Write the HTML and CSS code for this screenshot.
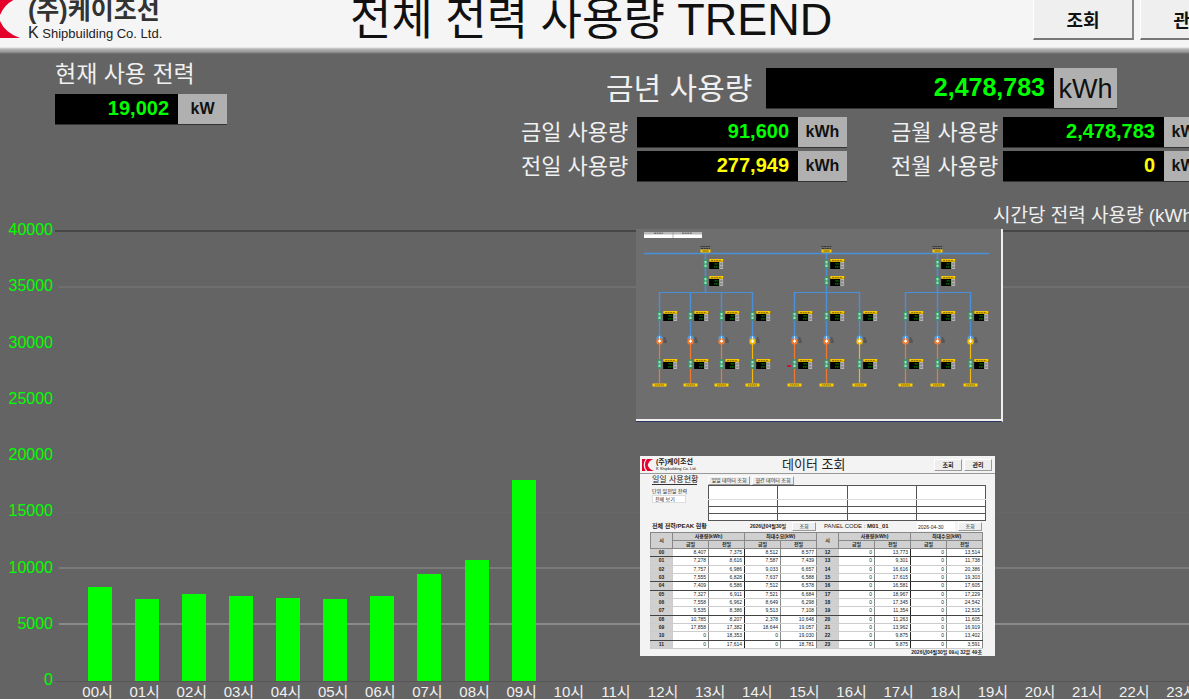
FILE: index.html
```html
<!DOCTYPE html>
<html lang="ko">
<head>
<title>전체 전력 사용량 TREND</title>
<meta charset="utf-8">
<link rel="stylesheet" href="styles.css">
</head>

<body>

<svg class="defs" width="0" height="0" aria-hidden="true">
	<symbol id="mark" viewBox="0 0 36 36">
		<path d="M0 0h11Q5 9 5 18t6 18H0z"/>
		<path d="M15 0h19Q21 5 17 18q4 13 19 18H16Q9 29 9 18T15 0z"/>
	</symbol>
	<!-- breaker + meter, origin is on the feeder line -->
	<symbol id="meter" overflow="visible">
		<rect x="-2" y="-5" width="4" height="10" rx="2" fill="#359a6c"/>
		<rect x="-1" y="-3" width="2" height="2.4" fill="#a5dfc0"/>
		<rect x="-1" y=".6" width="2" height="2.4" fill="#a5dfc0"/>
		<rect x="3.7" y="-5" width="14.3" height="10" fill="#000"/>
		<rect x="13.7" y="-2" width="4.3" height="7" fill="#b5b5b5"/>
		<path d="M14.6 0h2.4M14.6 3h2.4" stroke="#555" stroke-width=".8"/>
		<rect x="3.7" y="-5" width="14.3" height="2.8" fill="#ffcc00"/>
		<path d="M5.5 -3.6h10.5" stroke="#8a6d00" stroke-width="1" stroke-dasharray="2 .6"/>
		<path d="M9 -.2h4M8.5 2.8h4.5" stroke="#0a7d0a" stroke-width="1.2" stroke-dasharray="1.4 .4"/>
	</symbol>
	<symbol id="trans" overflow="visible">
		<circle cy="-1.5" r="3" fill="#4c9be6"/>
		<circle cy="1.4" r="3.2" fill="currentColor"/>
		<path d="M0 -3.5v2M0 -.5L-1.2 1.5h2.4zM0 1v2" stroke="#fff" stroke-width=".9" fill="#fff"/>
		<path d="M4 -2h2M4 0h3M4 2h3.4" stroke="#333" stroke-width=".8"/>
	</symbol>
	<symbol id="load" overflow="visible">
		<rect x="-7" y="-1.5" width="14" height="3" fill="#ffcc00"/>
		<path d="M-4.5 0h9" stroke="#6b5600" stroke-width="1" stroke-dasharray="1.6 .4"/>
	</symbol>
	<symbol id="incomer" overflow="visible">
		<path d="M-5 -6.5h10M-4.5 -4.5h9" stroke="#333" stroke-width="1" stroke-dasharray="2 .6"/>
		<rect x="-5" y="-3.5" width="10" height="3" fill="#ffcc00"/>
		<path d="M-3 -2h6" stroke="#6b5600" stroke-width="1"/>
	</symbol>
	<!-- one branch: two meters, transformer, load -->
	<symbol id="branch" overflow="visible">
		<path d="M0 63V108" stroke="#4a90d9" stroke-width="1.4"/>
		<path d="M0 114V154" stroke="currentColor" stroke-width="1.2"/>
		<use href="#meter" y="87"/>
		<use href="#trans" y="111"/>
		<use href="#meter" y="135"/>
		<use href="#load" y="156"/>
	</symbol>
	<symbol id="feeder" overflow="visible">
		<path d="M0 24V63" stroke="#4a90d9" stroke-width="1.6"/>
		<use href="#incomer" y="24"/>
		<use href="#meter" y="35"/>
		<use href="#meter" y="52"/>
	</symbol>
</svg>

<header class="topbar">
	<div class="brand">
		<svg class="brand-mark"><use href="#mark"/></svg>
		<div>
			<div class="brand-ko">(주)케이조선</div>
			<div class="brand-en"><span>K</span> Shipbuilding Co. Ltd.</div>
		</div>
	</div>
	<h1>전체 전력 사용량 TREND</h1>
	<nav class="menu">
		<button type="button">조회</button>
		<button type="button">관리</button>
	</nav>
</header>

<main>
	<section class="summary">
		<div class="now">
			<h2>현재 사용 전력</h2>
			<div class="readout"><output>19,002</output><span class="unit">kW</span></div>
		</div>
		<div class="totals">
			<div class="year">
				<span class="name">금년 사용량</span>
				<div class="readout big"><output>2,478,783</output><span class="unit">kWh</span></div>
			</div>
			<div class="periods">
				<span class="name">금일 사용량</span>
				<div class="readout"><output>91,600</output><span class="unit">kWh</span></div>
				<span class="name month">금월 사용량</span>
				<div class="readout"><output>2,478,783</output><span class="unit">kWh</span></div>
				<span class="name">전일 사용량</span>
				<div class="readout prev"><output>277,949</output><span class="unit">kWh</span></div>
				<span class="name month">전월 사용량</span>
				<div class="readout prev"><output>0</output><span class="unit">kWh</span></div>
			</div>
		</div>
	</section>

	<section class="trend">
		<h2>시간당 전력 사용량 (kWh)</h2>
		<div class="chart">
			<div class="y-axis">
				<span>40000</span><span>35000</span><span>30000</span><span>25000</span><span>20000</span><span>15000</span><span>10000</span><span>5000</span><span>0</span>
			</div>
			<div class="plot">
				<div class="grid"><i></i><i></i><i></i><i></i><i></i><i></i><i></i><i></i></div>
				<div class="bars">
					<b style="height:21.0%"></b><b style="height:18.2%"></b><b style="height:19.4%"></b><b style="height:18.9%"></b><b style="height:18.4%"></b><b style="height:18.3%"></b><b style="height:18.9%"></b><b style="height:23.8%"></b><b style="height:27.0%"></b><b style="height:44.7%"></b><b></b><b></b><b></b><b></b><b></b><b></b><b></b><b></b><b></b><b></b><b></b><b></b><b></b><b></b>
				</div>
			</div>
		</div>
		<div class="x-axis">
			<span>00시</span><span>01시</span><span>02시</span><span>03시</span><span>04시</span><span>05시</span><span>06시</span><span>07시</span><span>08시</span><span>09시</span><span>10시</span><span>11시</span><span>12시</span><span>13시</span><span>14시</span><span>15시</span><span>16시</span><span>17시</span><span>18시</span><span>19시</span><span>20시</span><span>21시</span><span>22시</span><span>23시</span>
		</div>
	</section>
</main>

<!-- single line diagram window -->
<aside class="window diagram">
	<svg viewBox="0 0 364 189" width="364" height="189" fill="none" stroke-width="1">
		<rect x="8" y="3" width="58" height="6" fill="#fff"/>
		<rect x="8" y="3" width="58" height="2.5" fill="#b8b8b8"/>
		<path d="M18 4.2h9M46 4.2h10" stroke="#555" stroke-dasharray="2 .6"/>
		<path d="M37 3v6" stroke="#888" stroke-width=".6"/>
		<path d="M8 24.5H353" stroke="#4a90d9" stroke-width="1.4"/>
		<path d="M23 63.5H117M158 63.5H224M269 63.5H335" stroke="#4a90d9"/>
		<use href="#branch" x="23.5" color="#ee7a30"/>
		<use href="#branch" x="54.5" color="#ee7a30"/>
		<use href="#branch" x="85.5" color="#ee7a30"/>
		<use href="#branch" x="116.5" color="#f0b90c"/>
		<use href="#branch" x="158.5" color="#ee7a30"/>
		<use href="#branch" x="190.5" color="#ee7a30"/>
		<use href="#branch" x="223.5" color="#f0b90c"/>
		<use href="#branch" x="269.5" color="#ee7a30"/>
		<use href="#branch" x="301.5" color="#ee7a30"/>
		<use href="#branch" x="334.5" color="#f0b90c"/>
		<use href="#feeder" x="69.5"/>
		<use href="#feeder" x="190.5"/>
		<use href="#feeder" x="301.5"/>
		<rect x="151" y="136" width="4" height="2" fill="#d0103a"/>
	</svg>
</aside>

<!-- data query window -->
<aside class="window report">
	<div class="r-top">
		<svg class="r-mark"><use href="#mark"/></svg>
		<div class="r-brand">(주)케이조선<small>K Shipbuilding Co. Ltd.</small></div>
		<h2>데이터 조회</h2>
		<button type="button">조회</button>
		<button type="button">관리</button>
	</div>
	<div class="r-query">
		<div class="r-side">
			<h3>일일 사용현황</h3>
			<label for="unit">단위 일전일 전력</label>
			<select id="unit"><option>전체 보기</option></select>
		</div>
		<div class="r-main">
			<button type="button">일일 데이터 조회</button>
			<button type="button">월간 데이터 조회</button>
			<table class="blank">
				<tr><td></td><td></td><td></td><td></td></tr>
				<tr><td></td><td></td><td></td><td></td></tr>
				<tr><td></td><td></td><td></td><td></td></tr>
				<tr><td></td><td></td><td></td><td></td></tr>
			</table>
		</div>
	</div>
	<div class="r-bar">
		<strong>전체 전력/PEAK 현황</strong>
		<strong class="r-date">2026년04월30일</strong>
		<button type="button">조회</button>
		<span class="r-code">PANEL CODE : <b>M01_01</b></span>
		<input type="text" value="2026-04-30" aria-label="날짜">
		<button type="button">조회</button>
	</div>
	<table class="data">
		<colgroup><col class="h"><col><col><col><col><col class="h"><col><col><col><col></colgroup>
		<thead>
			<tr><th rowspan="2">시</th><th colspan="2">사용량(kWh)</th><th colspan="2">최대수요(kW)</th><th rowspan="2">시</th><th colspan="2">사용량(kWh)</th><th colspan="2">최대수요(kW)</th></tr>
			<tr><th>금일</th><th>전일</th><th>금일</th><th>전일</th><th>금일</th><th>전일</th><th>금일</th><th>전일</th></tr>
		</thead>
		<tbody>
			<tr><th>00</th><td>8,407</td><td>7,375</td><td>8,512</td><td>8,577</td><th>12</th><td>0</td><td>13,773</td><td>0</td><td>13,514</td></tr>
			<tr><th>01</th><td>7,278</td><td>8,616</td><td>7,587</td><td>7,439</td><th>13</th><td>0</td><td>9,301</td><td>0</td><td>11,738</td></tr>
			<tr><th>02</th><td>7,757</td><td>6,986</td><td>9,033</td><td>6,657</td><th>14</th><td>0</td><td>16,616</td><td>0</td><td>20,386</td></tr>
			<tr><th>03</th><td>7,555</td><td>6,828</td><td>7,637</td><td>6,588</td><th>15</th><td>0</td><td>17,615</td><td>0</td><td>19,303</td></tr>
			<tr><th>04</th><td>7,409</td><td>6,586</td><td>7,512</td><td>6,578</td><th>16</th><td>0</td><td>16,581</td><td>0</td><td>17,605</td></tr>
			<tr><th>05</th><td>7,327</td><td>6,911</td><td>7,521</td><td>6,684</td><th>17</th><td>0</td><td>18,967</td><td>0</td><td>17,229</td></tr>
			<tr><th>06</th><td>7,558</td><td>6,962</td><td>8,649</td><td>6,298</td><th>18</th><td>0</td><td>17,345</td><td>0</td><td>24,542</td></tr>
			<tr><th>07</th><td>9,535</td><td>8,386</td><td>9,513</td><td>7,108</td><th>19</th><td>0</td><td>11,354</td><td>0</td><td>12,515</td></tr>
			<tr><th>08</th><td>10,785</td><td>8,207</td><td>2,378</td><td>10,648</td><th>20</th><td>0</td><td>11,263</td><td>0</td><td>11,605</td></tr>
			<tr><th>09</th><td>17,858</td><td>17,382</td><td>18,644</td><td>19,057</td><th>21</th><td>0</td><td>13,962</td><td>0</td><td>16,919</td></tr>
			<tr><th>10</th><td>0</td><td>18,353</td><td>0</td><td>19,030</td><th>22</th><td>0</td><td>9,875</td><td>0</td><td>13,402</td></tr>
			<tr><th>11</th><td>0</td><td>17,614</td><td>0</td><td>18,781</td><th>23</th><td>0</td><td>9,875</td><td>0</td><td>3,591</td></tr>
		</tbody>
	</table>
	<p class="r-clock">2026년04월30일 09시 32분 49초</p>
</aside>

</body>
</html>
```
FILE: styles.css
```css
* { box-sizing: border-box; }

body {
	position: relative;
	margin: 0;
	height: 100vh;
	overflow: hidden;
	background: #646464;
	color: #f0f0f0;
	font-family: "Liberation Sans", "Noto Sans CJK KR", sans-serif;
}

h1, h2, h3, p { margin: 0; font-weight: normal; }

button, input, select { font-family: inherit; border-radius: 0; }

.defs { position: absolute; }

/* top bar */
.topbar {
	display: flex;
	align-items: flex-start;
	height: 54px;
	overflow: hidden;
	background: linear-gradient(#f5f5f5 47px, #b4b4b4 49px, #969696 52px, #646464 54px);
	color: #111;
}

.brand {
	display: flex;
	flex: none;
	gap: 8px;
	width: 350px;
	margin: -4px 0 0 -20px;
}

.brand-mark {
	width: 40px;
	height: 44px;
	fill: #e4002b;
}

.brand-ko {
	font-size: 25px;
	font-weight: bold;
	line-height: 28px;
	color: #333;
}

.brand-en {
	font-size: 13px;
	line-height: 18px;
	color: #222;
}

.brand-en span { font-size: 16px; }

.topbar h1 {
	flex: none;
	margin-left: 20px;
	font-size: 45px;
	line-height: 40px;
	white-space: nowrap;
}

.menu {
	display: flex;
	flex: none;
	gap: 6px;
	margin: -4px -52px 0 auto;
}

.menu button {
	width: 101px;
	height: 44px;
	padding: 2px 0 0;
	border: 1px solid #fff;
	border-right: 2px solid #888;
	border-bottom: 2px solid #777;
	background: #efefef;
	color: #111;
	font-size: 18px;
	font-weight: bold;
}

/* readouts */
.summary {
	display: flex;
	padding-left: 55px;
}

.now {
	flex: none;
	width: 172px;
	padding-top: 8px;
}

.now h2 {
	margin-bottom: 8px;
	font-size: 23px;
	line-height: 24px;
	white-space: nowrap;
}

.readout {
	display: flex;
	height: 31px;
	background: #000;
	border-bottom: 1px solid #333;
	font-size: 20px;
	font-weight: bold;
}

.readout output {
	flex: 1;
	padding-right: 9px;
	line-height: 28px;
	text-align: right;
	color: #00ff00;
}

.readout.prev output { color: #ffff00; }

.readout .unit {
	width: 49px;
	background: #b0b0b0;
	color: #111;
	font-size: 16px;
	line-height: 30px;
	text-align: center;
}

.totals {
	flex: none;
	margin-left: 294px;
	padding-top: 14px;
}

.name { white-space: nowrap; }

.year {
	display: flex;
	align-items: center;
	gap: 14px;
	margin-left: 85px;
}

.year .name {
	width: 146px;
	font-size: 30px;
	line-height: 36px;
}

.readout.big {
	width: 351px;
	height: 41px;
	font-size: 25px;
}

.readout.big output { line-height: 38px; }

.readout.big .unit {
	width: 63px;
	font-size: 27px;
	font-weight: normal;
	line-height: 42px;
}

.periods {
	display: grid;
	grid-template-columns: 110px 210px 144px 210px;
	gap: 3px 6px;
	align-items: center;
	margin-top: 8px;
}

.periods .name { font-size: 22px; line-height: 28px; }
.periods .month { margin-left: 38px; }

/* chart */
.trend h2 {
	margin-top: 24px;
	padding-left: 993px;
	font-size: 19px;
	line-height: 20px;
	white-space: nowrap;
}

.chart {
	display: flex;
	height: 452px;
	margin-top: 4px;
}

.y-axis {
	display: flex;
	flex-direction: column;
	justify-content: space-between;
	flex: none;
	width: 55px;
	margin: -8px 0 -6px;
	padding-right: 2px;
	color: #00ff00;
	font-size: 16px;
	line-height: 16px;
	text-align: right;
}

.plot {
	position: relative;
	flex: 1;
	margin-right: -18px;
	padding-left: 21px;
	border-top: 2px solid #464646;
	border-bottom: 1px solid #565656;
}

/* grid lines lie behind the bars */
.grid {
	position: absolute;
	inset: 0 0 0 4px;
	display: grid;
	grid-template-rows: repeat(8, 1fr);
}

.grid i { border-bottom: 1px solid #676767; }
.grid i:nth-child(1) { border-bottom: 2px solid #6f6f6f; }
.grid i:nth-child(6) { border-bottom: 2px solid #7a7a7a; }
.grid i:nth-child(7) { border-bottom: 2px solid #8a8a8a; }
.grid i:nth-child(2), .grid i:nth-child(3), .grid i:nth-child(4), .grid i:nth-child(8) { border: 0; }

.bars {
	position: relative;
	display: grid;
	grid-template-columns: repeat(24, 1fr);
	align-items: end;
	justify-items: center;
	height: 100%;
}

.bars b { width: 24px; background: #00ff00; }

.x-axis {
	display: grid;
	grid-template-columns: repeat(24, 1fr);
	margin: 1px -16px 0 74px;
	font-size: 15px;
	line-height: 18px;
	text-align: center;
	white-space: nowrap;
}

/* floating windows */
.window { position: absolute; overflow: hidden; }

.diagram {
	top: 229px;
	left: 636px;
	width: 367px;
	height: 193px;
	background: #6e6e6e;
	border-right: 2px solid #f0f0f0;
	border-bottom: 1px solid #2b3563;
	box-shadow: inset 0 -2px #f0f0f0;
}

.report {
	top: 456px;
	left: 640px;
	width: 355px;
	height: 200px;
	background: #f3f3f3;
	color: #222;
	font-size: 5px;
	line-height: 7px;
}

.report button {
	height: 9px;
	padding: 0;
	border: 1px solid #fff;
	border-right-color: #999;
	border-bottom-color: #999;
	background: #eee;
	color: #222;
	font-size: 5px;
	line-height: 7px;
}

.r-top {
	display: flex;
	align-items: flex-start;
	height: 18px;
	padding: 3px 3px 0 2px;
	border-bottom: 1px solid #999;
}

.r-mark { width: 12px; height: 12px; fill: #e4002b; }

.r-brand {
	width: 126px;
	margin: -1px 0 0 2px;
	font-size: 7px;
	font-weight: bold;
	line-height: 8px;
}

.r-brand small { display: block; font-size: 4px; font-weight: normal; line-height: 5px; }

.r-top h2 {
	flex: 1;
	font-size: 13px;
	line-height: 12px;
}

.r-top button { width: 28px; height: 12px; margin-left: 2px; font-size: 6px; font-weight: bold; }

.r-query { display: flex; padding: 2px 9px 0 12px; }

.r-side { width: 56px; }

.r-side h3 {
	width: 45px;
	margin-bottom: 3px;
	border-bottom: 1px solid #333;
	font-size: 8px;
	line-height: 8px;
	white-space: nowrap;
}

.r-side label { display: block; white-space: nowrap; }

.r-side select {
	display: block;
	appearance: none;
	width: 34px;
	height: 8px;
	padding: 0 2px;
	border: 1px solid #ddd;
	background: #fff;
	color: #222;
	font-size: 5px;
	line-height: 6px;
}

.r-main { flex: 1; }

.r-main button { float: left; width: 42px; margin-right: 2px; }

.blank {
	clear: both;
	width: 100%;
	height: 35px;
	border-collapse: collapse;
	background: #fff;
}

.blank td { padding: 0; border: 1px solid #555; height: 7px; }
.blank tr:first-child td { height: 14px; border-bottom-color: #ddd; }

.r-bar {
	display: flex;
	align-items: center;
	height: 11px;
	padding: 0 13px 0 12px;
}

.r-bar strong { width: 98px; font-size: 6px; white-space: nowrap; }
.r-bar .r-date { width: 42px; font-size: 5px; }
.r-bar button { width: 24px; }
.r-code { margin: 0 auto 0 8px; font-size: 6px; }

.r-bar input {
	width: 38px;
	height: 9px;
	margin-right: 3px;
	padding: 0 1px;
	border: 0;
	background: #fff;
	color: #222;
	font-size: 5px;
}

.data {
	table-layout: fixed;
	width: 333px;
	height: 117px;
	margin: 0 0 0 10px;
	border-collapse: collapse;
	background: #fff;
	border: 1px solid #777;
}

.data .h { width: 22px; }
.data th, .data td { padding: 0; border: 1px solid #ccc; line-height: 7px; }
.data th { background: #d0d0d0; font-size: 5px; }
.data td { padding-right: 2px; text-align: right; border-right-color: #888; }
.data td:nth-child(3), .data td:nth-child(8) { border-right-color: #222; }
.data thead th { border-color: #888; }
.data tbody tr:nth-child(1) > *, .data tbody tr:nth-child(4) > *,
.data tbody tr:nth-child(5) > *, .data tbody tr:nth-child(8) > *,
.data tbody tr:nth-child(11) > * { border-bottom-color: #444; }

.r-clock {
	padding-right: 13px;
	font-weight: bold;
	line-height: 6px;
	text-align: right;
}
```
